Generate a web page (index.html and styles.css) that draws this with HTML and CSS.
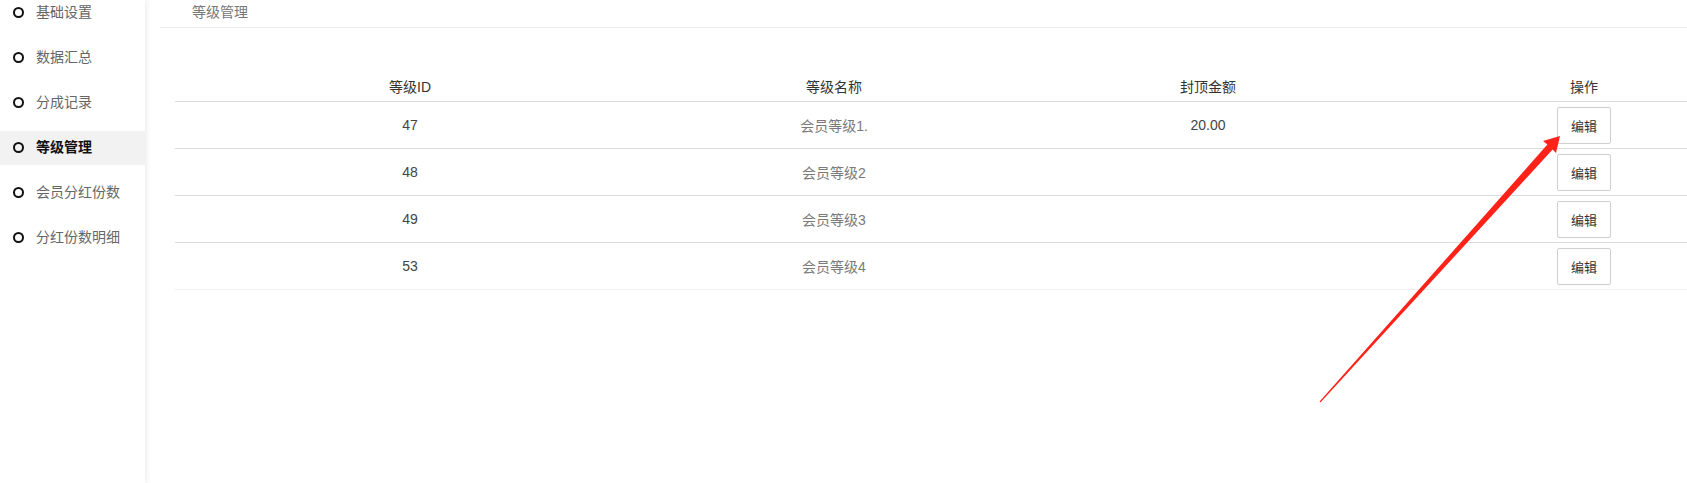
FILE: index.html
```html
<!DOCTYPE html>
<html lang="zh-CN">
<head>
<meta charset="utf-8">
<title>等级管理</title>
<link rel="stylesheet" href="styles.css">
</head>
<body>
<div class="layout">
  <aside class="sidebar">
    <ul class="menu">
      <li class="menu-item"><span class="dot"></span>基础设置</li>
      <li class="menu-item"><span class="dot"></span>数据汇总</li>
      <li class="menu-item"><span class="dot"></span>分成记录</li>
      <li class="menu-item active"><span class="dot"></span>等级管理</li>
      <li class="menu-item"><span class="dot"></span>会员分红份数</li>
      <li class="menu-item"><span class="dot"></span>分红份数明细</li>
    </ul>
  </aside>
  <main class="main">
    <div class="page-title">等级管理</div>
    <div class="table">
      <div class="row head">
        <div class="cell">等级ID</div>
        <div class="cell">等级名称</div>
        <div class="cell">封顶金额</div>
        <div class="cell op">操作</div>
      </div>
      <div class="row">
        <div class="cell id">47</div>
        <div class="cell name">会员等级1.</div>
        <div class="cell amount">20.00</div>
        <div class="cell op"><button class="btn">编辑</button></div>
      </div>
      <div class="row">
        <div class="cell id">48</div>
        <div class="cell name">会员等级2</div>
        <div class="cell amount"></div>
        <div class="cell op"><button class="btn">编辑</button></div>
      </div>
      <div class="row">
        <div class="cell id">49</div>
        <div class="cell name">会员等级3</div>
        <div class="cell amount"></div>
        <div class="cell op"><button class="btn">编辑</button></div>
      </div>
      <div class="row last">
        <div class="cell id">53</div>
        <div class="cell name">会员等级4</div>
        <div class="cell amount"></div>
        <div class="cell op"><button class="btn">编辑</button></div>
      </div>
    </div>
  </main>
</div>
<svg class="arrow" width="1687" height="483" viewBox="0 0 1687 483" xmlns="http://www.w3.org/2000/svg">
  <polygon fill="#ff2219" points="1319.6,401.6 1320.4,402.4 1552.6,149.6 1556,153 1560,136 1543,141 1547.4,144.6"/>
</svg>
</body>
</html>
```
FILE: styles.css
```css
html, body {
  margin: 0;
  padding: 0;
  background: #fff;
  overflow: hidden;
}
body {
  font-family: "Liberation Sans", "Noto Sans CJK SC", sans-serif;
  font-size: 14px;
  color: #333;
}
.layout {
  display: flex;
  height: 483px;
}
.sidebar {
  width: 145px;
  flex: none;
  background: #fff;
  box-shadow: 1px 0 6px rgba(0, 0, 0, 0.09);
  position: relative;
  z-index: 1;
}
.menu {
  list-style: none;
  margin: -4px 0 0 0;
  padding: 0;
  display: flex;
  flex-direction: column;
  gap: 11px;
}
.menu-item {
  height: 30px;
  padding-bottom: 4px;
  display: flex;
  align-items: center;
  padding-left: 13px;
  color: #666;
  font-size: 14px;
}
.menu-item.active {
  background: #f2f2f2;
  color: #111;
  font-weight: bold;
}
.dot {
  width: 7px;
  height: 7px;
  border: 2px solid #111;
  border-radius: 50%;
  margin-right: 12px;
  flex: none;
  margin-top: 3px;
}
.main {
  flex: 1;
  padding-left: 15px;
}
.page-title {
  height: 27px;
  line-height: 24px;
  padding-left: 32px;
  border-bottom: 1px solid #eaeaea;
  color: #777;
  font-size: 14px;
}
.table {
  margin-left: 15px;
  margin-top: 47px;
}
.row {
  display: grid;
  grid-template-columns: 470px 378px 370px 1fr;
  height: 46px;
  border-bottom: 1px solid #dcdcdc;
  align-items: center;
}
.row.head {
  height: 22px;
  padding-bottom: 4px;
  color: #333;
}
.row.last {
  border-bottom-color: #efefef;
}
.cell {
  text-align: center;
}
.cell.op {
  padding-left: 88px;
  display: flex;
  justify-content: center;
}
.cell.id {
  color: #444;
}
.cell.name {
  color: #7a7a7a;
}
.cell.amount {
  color: #444;
}
.btn {
  width: 54px;
  height: 37px;
  border: 1px solid #cfcfcf;
  border-radius: 2px;
  background: #fff;
  font-family: "Liberation Sans", "Noto Sans CJK SC", sans-serif;
  font-size: 13px;
  color: #333;
  padding: 0;
}
.arrow {
  position: absolute;
  left: 0;
  top: 0;
  pointer-events: none;
  z-index: 2;
}
```
